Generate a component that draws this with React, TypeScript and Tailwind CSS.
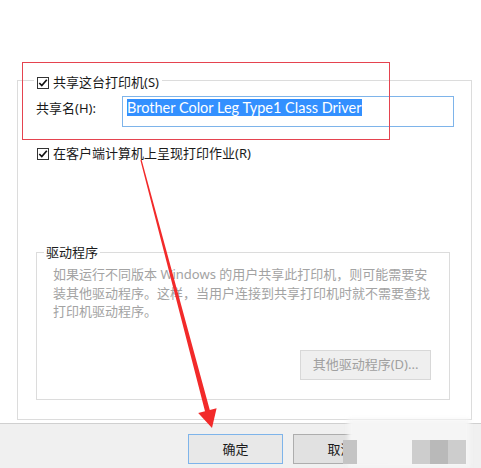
import React from "react";

function Check() {
  return (
    <svg width="12" height="12" viewBox="0 0 12 12" className="shrink-0">
      <rect x="0.5" y="0.5" width="11" height="11" fill="#fff" stroke="#333" />
      <path d="M2.3 6 L4.8 8.6 L9.8 2.8" fill="none" stroke="#111" strokeWidth="1.7" />
    </svg>
  );
}

export default function App() {
  return (
    <div className="relative w-[481px] h-[468px] bg-white overflow-hidden text-[13px] leading-[17px] text-[#1a1a1a] font-['Noto_Sans','Noto_Sans_CJK_SC',sans-serif]">
      <div className="h-[423px] pt-[80px] pl-[17px]">
        <div className="w-[455px] h-[340px] border border-[#dcdcdc] flex flex-col">
          <div className="-mt-[7px] ml-[16px] px-[3px] h-[17px] w-fit bg-white flex items-center gap-[4px]">
            <Check />
            <span>共享这台打印机(S)</span>
          </div>
          <div className="mt-[5px] flex items-start pl-[18px]">
            <div className="w-[86px] pt-[4px]">共享名(H):</div>
            <div className="w-[332px] h-[31px] border border-[#7eb4ea] pl-[4px] pt-[2px]">
              <span className="bg-[#3390ff] text-white text-[14.5px] leading-[17px] inline-block font-['Lato',sans-serif]">
                Brother Color Leg Type1 Class Driver
              </span>
            </div>
          </div>
          <div className="mt-[18px] ml-[19px] h-[17px] flex items-center gap-[4px]">
            <Check />
            <span>在客户端计算机上呈现打印作业(R)</span>
          </div>
          <div className="mt-[90px] ml-[18px] w-[414px] h-[148px] border border-[#dcdcdc] flex flex-col">
            <div className="-mt-[9px] ml-[7px] px-[2px] w-fit bg-white h-[17px]">驱动程序</div>
            <div className="mt-[4px] pl-[16px] text-[#a3a3a3] leading-[18.5px] whitespace-nowrap">
              <div>如果运行不同版本 Windows 的用户共享此打印机，则可能需要安</div>
              <div>装其他驱动程序。这样，当用户连接到共享打印机时就不需要查找</div>
              <div>打印机驱动程序。</div>
            </div>
            <div className="mt-[29px] pr-[18px] flex justify-end">
              <div className="w-[131px] h-[30px] border border-[#d8d8d8] bg-[#efefef] text-[#a0a0a0] flex items-center justify-center">
                其他驱动程序(D)...
              </div>
            </div>
          </div>
        </div>
      </div>
      <div className="h-[45px] bg-[#f0f0f0] border-t border-[#d0d0d0] flex pt-[10px] pl-[188px] gap-[10px]">
        <div className="w-[95px] h-[30px] border border-[#7eb4ea] bg-[#e8e8e8] flex items-center justify-center">确定</div>
        <div className="w-[95px] h-[30px] border border-[#adadad] bg-[#e1e1e1] flex items-center justify-center">取消</div>
      </div>

      {/* watermark blur */}
      <div className="absolute left-[348px] top-[419px] w-[122px] h-[49px] bg-[#f5f5f5] blur-[2px]" />
      <div className="absolute left-[343px] top-[440px] w-[14px] h-[24px] bg-[#c4c4c4]" />
      <div className="absolute left-[412px] top-[440px] w-[18px] h-[24px] bg-[#cdcdcd]" />
      <div className="absolute left-[430px] top-[440px] w-[18px] h-[24px] bg-[#b9b9b9]" />
      <div className="absolute left-[448px] top-[440px] w-[18px] h-[24px] bg-[#cdcdcd]" />

      {/* red annotation box */}
      <div className="absolute left-[22px] top-[62px] w-[368px] h-[78px] border border-[#e5434f]" />

      {/* red arrow */}
      <svg className="absolute left-0 top-0 pointer-events-none" width="481" height="468" viewBox="0 0 481 468">
        <polygon
          points="141.6,159.8 209.8,410.0 216.6,408.2 212,428 198.2,413.0 205.0,411.2 140.4,160.2"
          fill="#f22a2a"
        />
      </svg>
    </div>
  );
}
